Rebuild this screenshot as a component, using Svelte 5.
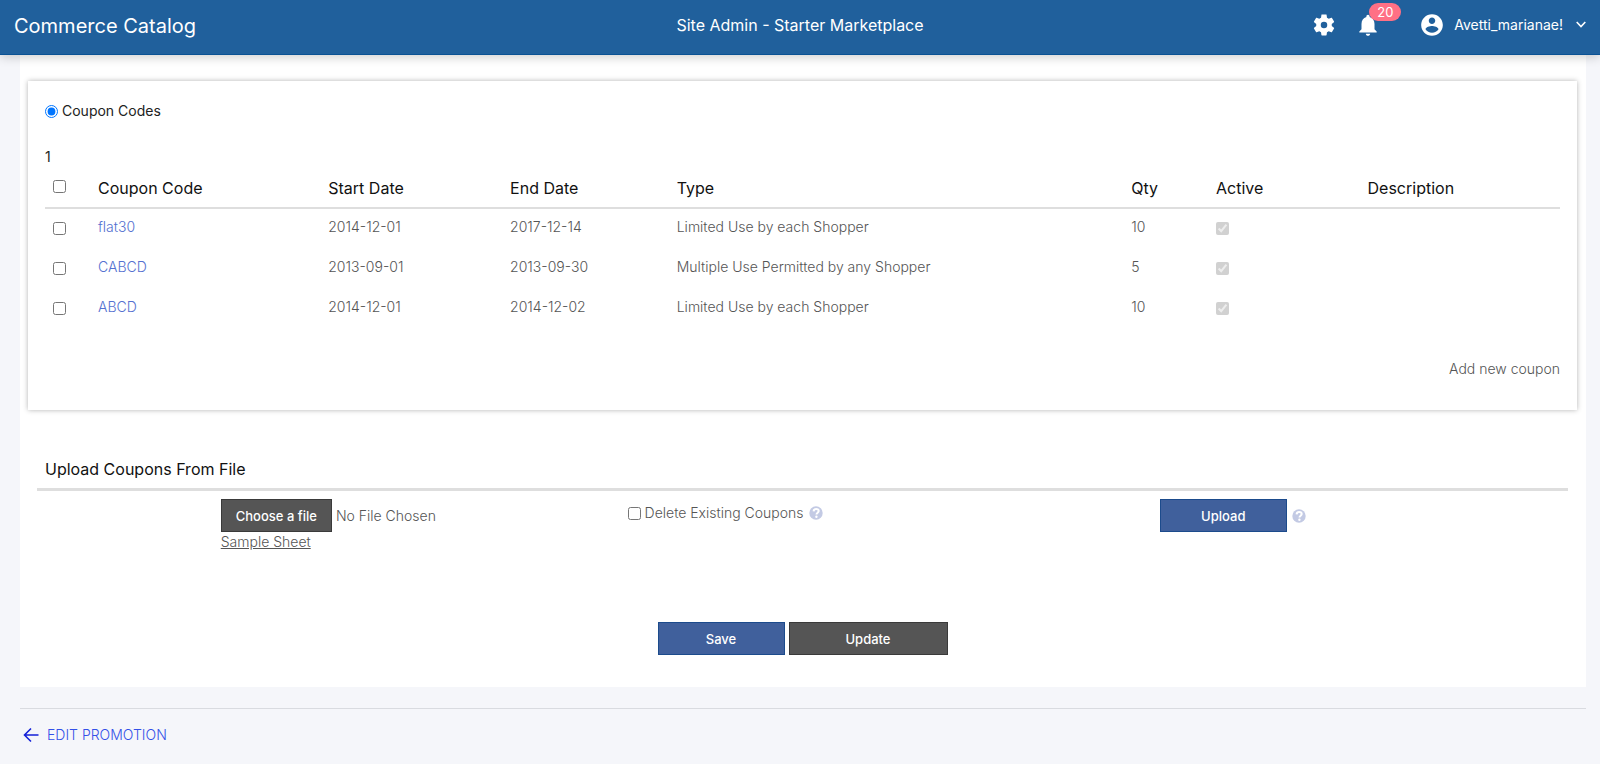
<script lang="ts">
  type Coupon = {
    code: string;
    startDate: string;
    endDate: string;
    type: string;
    qty: number;
    active: boolean;
    description: string;
  };

  const coupons: Coupon[] = [
    {
      code: "flat30",
      startDate: "2014-12-01",
      endDate: "2017-12-14",
      type: "Limited Use by each Shopper",
      qty: 10,
      active: true,
      description: "",
    },
    {
      code: "CABCD",
      startDate: "2013-09-01",
      endDate: "2013-09-30",
      type: "Multiple Use Permitted by any Shopper",
      qty: 5,
      active: true,
      description: "",
    },
    {
      code: "ABCD",
      startDate: "2014-12-01",
      endDate: "2014-12-02",
      type: "Limited Use by each Shopper",
      qty: 10,
      active: true,
      description: "",
    },
  ];

  let selected = $state<string[]>([]);
  let deleteExisting = $state(false);
  let mode = $state("codes");

  function toggleAll() {
    selected = selected.length === coupons.length ? [] : coupons.map((c) => c.code);
  }
</script>

{#snippet help(label: string)}
  <svg class="help" viewBox="0 0 14 14" role="img" aria-label={label}>
    <circle cx="7" cy="7" r="6.7" fill="#c3cae4" />
    <path
      d="M4.6 5.4c.1-1.5 1.1-2.3 2.6-2.3s2.500.8 2.500 2c0 1.600-2.200 1.700-2.200 3.400"
      fill="none"
      stroke="#fff"
      stroke-width="2"
    />
    <circle cx="7.4" cy="10.8" r="1.2" fill="#fff" />
  </svg>
{/snippet}

<header class="topbar">
  <div class="brand">Commerce Catalog</div>
  <div class="site">Site Admin - Starter Marketplace</div>
  <div class="tools">
    <button type="button" class="icon-button" aria-label="Settings">
      <svg viewBox="0 0 24 24" fill="currentColor">
        <path
          d="M19.14 12.94c.04-.3.06-.61.06-.94 0-.32-.02-.64-.07-.94l2.03-1.58c.18-.14.23-.41.12-.61l-1.92-3.32c-.12-.22-.37-.29-.59-.22l-2.39.96c-.5-.38-1.03-.7-1.62-.94l-.36-2.54c-.04-.24-.24-.41-.48-.41h-3.84c-.24 0-.43.17-.47.41l-.36 2.54c-.59.24-1.13.57-1.62.94l-2.39-.96c-.22-.08-.47 0-.59.22L2.74 8.87c-.12.21-.08.47.12.61l2.03 1.58c-.05.3-.09.63-.09.94s.02.64.07.94l-2.03 1.58c-.18.14-.23.41-.12.61l1.92 3.32c.12.22.37.29.59.22l2.39-.96c.5.38 1.03.7 1.62.94l.36 2.54c.05.24.24.41.48.41h3.84c.24 0 .44-.17.47-.41l.36-2.54c.59-.24 1.13-.56 1.62-.94l2.39.96c.22.08.47 0 .59-.22l1.92-3.32c.12-.22.07-.47-.12-.61l-2.01-1.58zM12 15a3 3 0 1 1 0-6 3 3 0 0 1 0 6z"
        />
      </svg>
    </button>
    <button type="button" class="icon-button" aria-label="Notifications">
      <svg viewBox="0 0 24 24" fill="currentColor">
        <path
          d="M12 22c1.1 0 2-.9 2-2h-4c0 1.1.9 2 2 2zm6-6v-5c0-3.07-1.63-5.64-4.5-6.32V4c0-.83-.67-1.5-1.5-1.5s-1.5.67-1.5 1.5v.68C7.64 5.36 6 7.92 6 11v5l-2 2v1h16v-1l-2-2z"
        />
      </svg>
      <span class="badge">20</span>
    </button>
    <button type="button" class="account">
      <svg class="avatar" viewBox="0 0 24 24" fill="currentColor">
        <path
          d="M12 2C6.48 2 2 6.48 2 12s4.48 10 10 10 10-4.48 10-10S17.52 2 12 2zm0 3c1.66 0 3 1.34 3 3s-1.34 3-3 3-3-1.34-3-3 1.34-3 3-3zm0 14.2c-2.5 0-4.71-1.28-6-3.22.03-1.99 4-3.08 6-3.08 1.99 0 5.97 1.09 6 3.08-1.29 1.94-3.5 3.22-6 3.22z"
        />
      </svg>
      <span>Avetti_marianae!</span>
      <svg class="chevron" viewBox="0 0 10 10" fill="none" stroke="currentColor" stroke-width="1.6">
        <path d="M.7 2l4.3 4.5L9.300 2" />
      </svg>
    </button>
  </div>
</header>

<main class="content">
  <section class="card">
    <label class="mode">
      <input type="radio" name="mode" value="codes" bind:group={mode} />
      Coupon Codes
    </label>

    <p class="pages">1</p>

    <table>
      <thead>
        <tr>
          <th class="col-check">
            <input
              type="checkbox"
              aria-label="Select all coupons"
              checked={selected.length === coupons.length}
              onchange={toggleAll}
            />
          </th>
          <th class="col-code">Coupon Code</th>
          <th class="col-start">Start Date</th>
          <th class="col-end">End Date</th>
          <th class="col-type">Type</th>
          <th class="col-qty">Qty</th>
          <th class="col-active">Active</th>
          <th>Description</th>
        </tr>
      </thead>
      <tbody>
        {#each coupons as coupon (coupon.code)}
          <tr>
            <td class="col-check">
              <input
                type="checkbox"
                aria-label="Select {coupon.code}"
                value={coupon.code}
                bind:group={selected}
              />
            </td>
            <td><a class="code" href="#{coupon.code}">{coupon.code}</a></td>
            <td>{coupon.startDate}</td>
            <td>{coupon.endDate}</td>
            <td>{coupon.type}</td>
            <td>{coupon.qty}</td>
            <td class="check">
              <input type="checkbox" aria-label="{coupon.code} active" checked={coupon.active} disabled />
            </td>
            <td>{coupon.description}</td>
          </tr>
        {/each}
      </tbody>
    </table>

    <a class="add" href="#new">Add new coupon</a>
  </section>

  <section class="upload">
    <h2>Upload Coupons From File</h2>
    <div class="upload-row">
      <div>
        <div class="file">
          <button type="button" class="button dark">Choose a file</button>
          <span>No File Chosen</span>
        </div>
        <a class="sample" href="#sample">Sample Sheet</a>
      </div>
      <div class="delete">
        <label>
          <input type="checkbox" bind:checked={deleteExisting} />
          Delete Existing Coupons
        </label>
        {@render help("About deleting existing coupons")}
      </div>
      <div class="send">
        <button type="button" class="button primary">Upload</button>
        {@render help("About uploading")}
      </div>
    </div>
  </section>

  <div class="actions">
    <button type="button" class="button primary">Save</button>
    <button type="button" class="button dark wide">Update</button>
  </div>
</main>

<footer class="footer">
  <a href="#promotion">
    <svg viewBox="0 0 16 16" fill="none" stroke="#1420d8" stroke-width="1.6">
      <path d="M15.5 8h-14M8 1.5L1.5 8 8 14.5" />
    </svg>
    EDIT PROMOTION
  </a>
</footer>

<style>
  :global(body) {
    margin: 0;
    background: #f5f6fa;
    color: #555;
    font-family: Inter, "Open Sans", sans-serif;
    font-size: 14px;
    font-weight: 300;
    line-height: 20px;
  }

  button {
    font: inherit;
    cursor: pointer;
  }

  input {
    width: 13px;
    height: 13px;
    margin: 0;
    flex: none;
  }

  .topbar {
    position: relative;
    display: grid;
    grid-template-columns: 1fr auto 1fr;
    align-items: center;
    height: 54px;
    padding: 0 14px;
    border-bottom: 1px solid #0a5294;
    background: #20609c;
    box-shadow: 0 2px 10px rgba(0, 0, 0, 0.2);
    color: #fff;
  }

  .brand {
    padding-bottom: 2px;
    font-size: 20px;
    font-weight: 400;
    line-height: 28px;
  }

  .site {
    font-size: 16px;
    font-weight: 400;
    padding-bottom: 4px;
  }

  .tools {
    display: flex;
    align-items: center;
    justify-content: flex-end;
    gap: 18px;
    padding-bottom: 5px;
  }

  .icon-button,
  .account {
    position: relative;
    display: flex;
    align-items: center;
    padding: 0;
    border: 0;
    background: none;
    color: #fff;
  }

  .icon-button svg,
  .avatar {
    width: 26px;
    height: 26px;
  }

  .badge {
    position: absolute;
    top: -9px;
    left: 14px;
    width: 32px;
    border-radius: 9px;
    background: #ff7085;
    font-size: 13px;
    font-weight: 400;
    line-height: 18px;
  }

  .account {
    gap: 9px;
    margin-left: 20px;
    font-weight: 400;
  }

  .chevron {
    width: 10px;
    height: 10px;
    margin-left: 4px;
  }

  .content {
    margin: 0 14px 0 20px;
    padding: 26px 9px 32px 8px;
    background: #fff;
  }

  .card {
    padding: 20px 17px 31px;
    box-shadow: 0 0 5px rgba(0, 0, 0, 0.3);
  }

  .mode {
    display: flex;
    align-items: center;
    gap: 4px;
    color: #222;
    font-weight: 400;
  }

  .pages {
    margin: 26px 0 4px;
    color: #222;
    font-weight: 400;
  }

  table {
    width: 100%;
    table-layout: fixed;
    border-collapse: collapse;
    text-align: left;
  }

  th {
    height: 34px;
    padding: 0 0 2px;
    border-bottom: 2px solid #dedede;
    color: #111;
    font-size: 16px;
    font-weight: 400;
  }

  td {
    height: 36px;
    padding: 0 0 4px;
  }

  th input,
  td input {
    display: block;
  }

  .col-check {
    width: 3.5%;
    padding-left: 8px;
    box-sizing: border-box;
  }

  th.col-check {
    padding-bottom: 6px;
  }

  td.col-check,
  .check {
    height: 38px;
    padding-bottom: 2px;
  }

  .col-code {
    width: 15.2%;
  }

  .col-start {
    width: 12%;
  }

  .col-end {
    width: 11%;
  }

  .col-type {
    width: 30%;
  }

  .col-qty {
    width: 5.6%;
  }

  .col-active {
    width: 10%;
  }

  a {
    color: inherit;
    text-decoration: none;
  }

  .code {
    color: #5470d0;
  }

  .add {
    display: block;
    width: fit-content;
    margin: 30px 0 0 auto;
    font-weight: 300;
  }

  .upload {
    margin: 48px 9px 0;
  }

  h2 {
    margin: 0;
    padding: 0 8px 8px;
    border-bottom: 3px solid #dedede;
    color: #111;
    font-size: 16px;
    font-weight: 400;
    line-height: 22px;
  }

  .upload-row {
    display: grid;
    grid-template-columns: 30.2% 39.5% 1fr;
    padding: 8px 0 0 12%;
  }

  .file,
  .delete,
  .delete label,
  .send,
  .actions {
    display: flex;
    align-items: center;
    gap: 4px;
  }

  .sample {
    text-decoration: underline;
  }

  .delete,
  .send {
    align-self: start;
    gap: 5px;
  }

  .delete {
    height: 28px;
  }

  .help {
    width: 14px;
    height: 14px;
  }

  .button {
    height: 33px;
    padding: 0 14px;
    border: 1px solid;
    color: #fff;
    font-size: 13px;
    font-weight: 500;
  }

  .primary {
    min-width: 127px;
    border-color: #1c4b8c;
    background: #40609c;
  }

  .dark {
    border-color: #3a3a3a;
    background: #555;
  }

  .wide {
    min-width: 159px;
  }

  .actions {
    justify-content: center;
    margin-top: 70px;
  }

  .footer {
    margin: 21px 14px 0 20px;
    padding: 16px 3px;
    border-top: 1px solid #d9dbe0;
  }

  .footer a {
    display: flex;
    align-items: center;
    width: fit-content;
    gap: 8px;
    color: #3350e8;
  }

  .footer svg {
    width: 16px;
    height: 16px;
  }
</style>
